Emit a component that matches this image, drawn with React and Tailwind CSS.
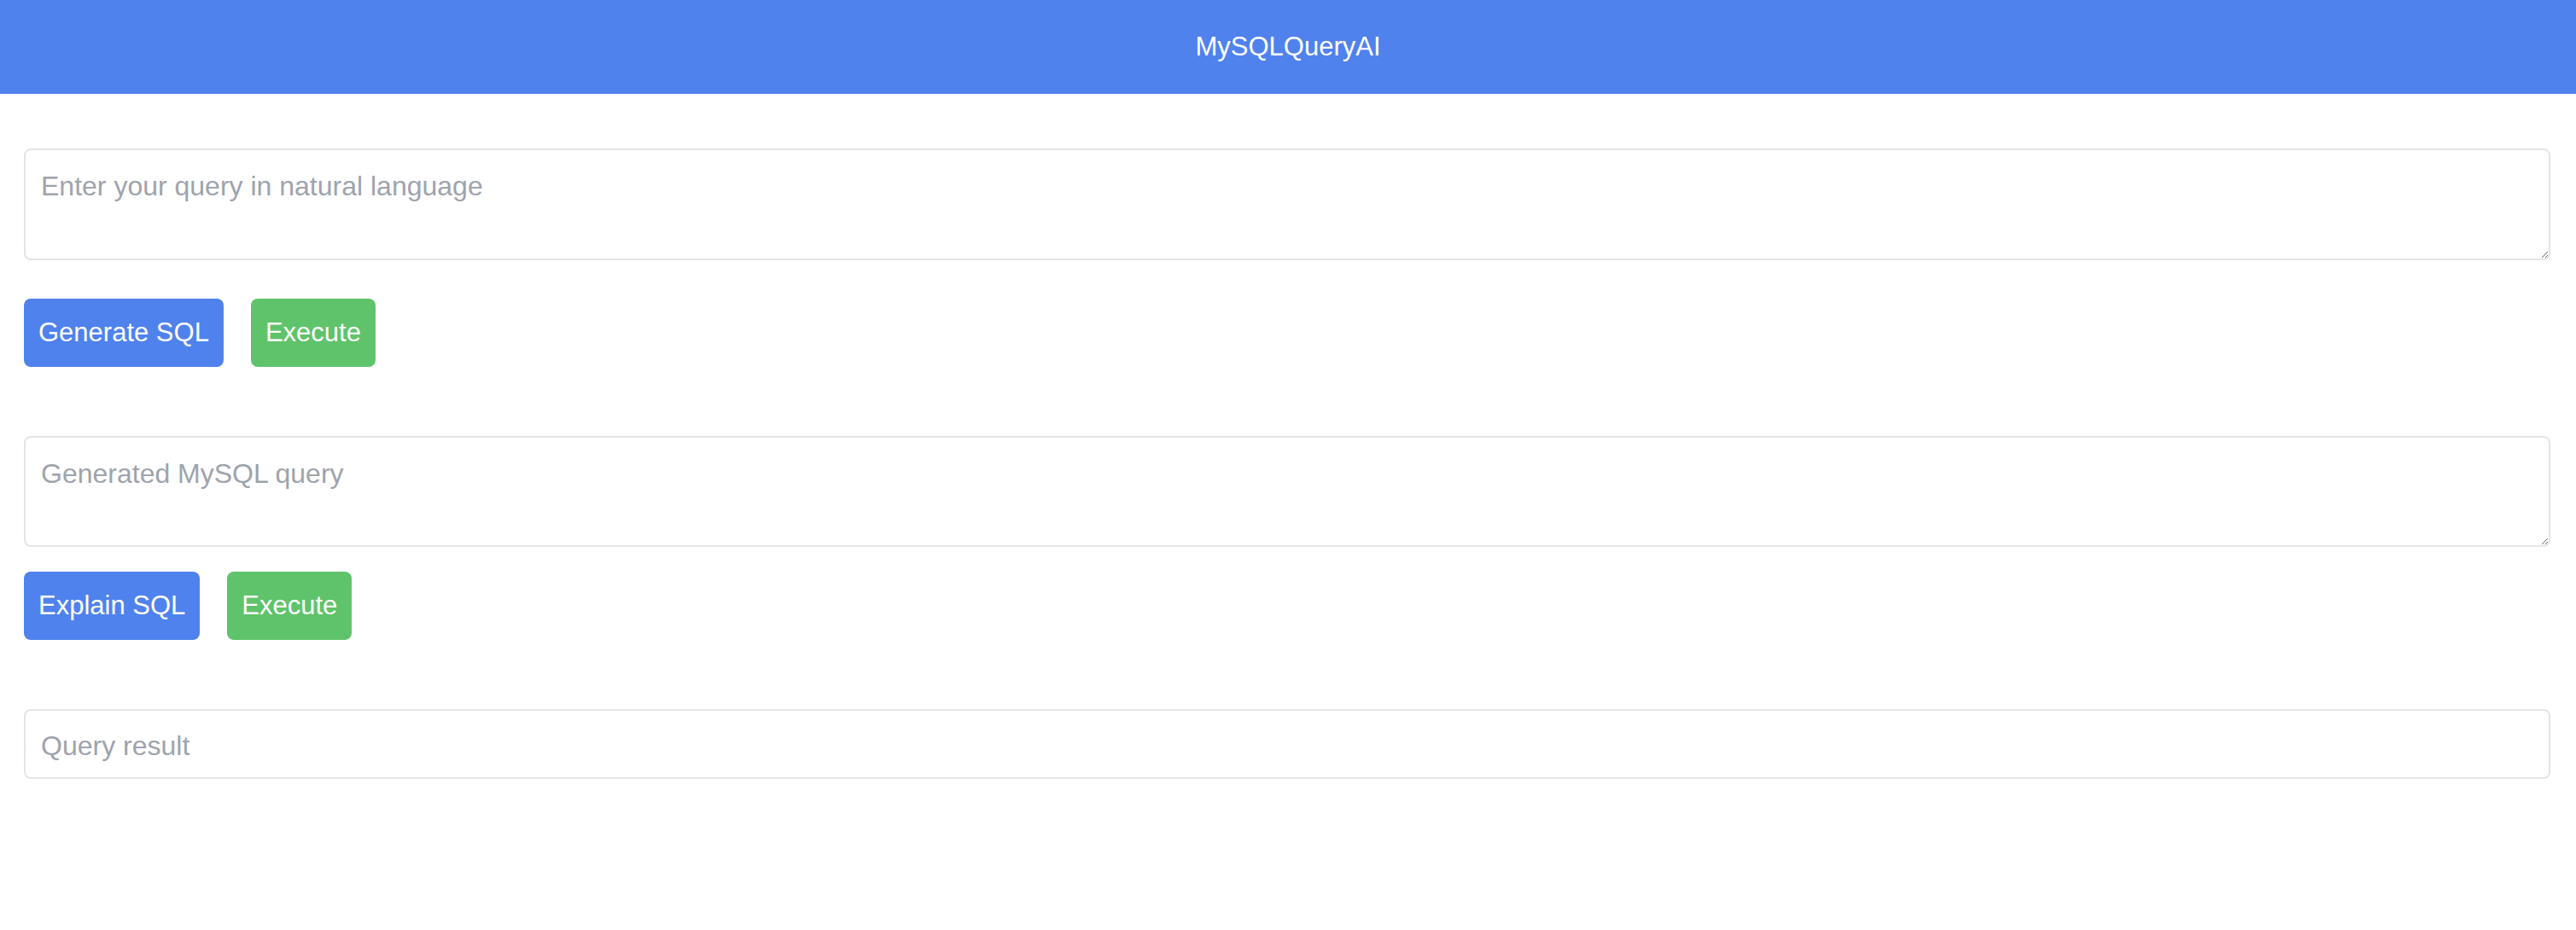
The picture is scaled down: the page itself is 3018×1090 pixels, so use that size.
import { useState } from 'react';

const font = { fontFamily: '"Liberation Sans", Arial, sans-serif' };

function ActionButton({ color, children, onClick }) {
  return (
    <button
      onClick={onClick}
      className={`h-[80px] px-[17px] rounded-[8px] text-white text-[31px] flex items-center ${color}`}
      style={font}
    >
      {children}
    </button>
  );
}

export default function App() {
  const [query, setQuery] = useState('');
  const [sql, setSql] = useState('');

  return (
    <div className="min-h-screen bg-white" style={font}>
      {/* Header */}
      <header className="h-[110px] bg-[#4f82ed] flex items-center justify-center">
        <h1 className="text-white text-[31px] font-normal">MySQLQueryAI</h1>
      </header>

      <main className="pl-[28px] pr-[30px] pt-[64px] flex flex-col">
        <textarea
          value={query}
          onChange={(e) => setQuery(e.target.value)}
          placeholder="Enter your query in natural language"
          className="w-full h-[131px] border-2 border-[#e4e5e9] rounded-[8px] pt-[22px] px-[18px] text-[32px] leading-[40px] text-gray-800 placeholder:text-[#9ea3ad] outline-none"
          style={font}
        />

        <div className="mt-[45px] flex gap-[32px]">
          <ActionButton color="bg-[#4f82ed]">Generate SQL</ActionButton>
          <ActionButton color="bg-[#5fc36b]">Execute</ActionButton>
        </div>

        <textarea
          value={sql}
          onChange={(e) => setSql(e.target.value)}
          placeholder="Generated MySQL query"
          className="mt-[81px] w-full h-[130px] border-2 border-[#e4e5e9] rounded-[8px] pt-[22px] px-[18px] text-[32px] leading-[40px] text-gray-800 placeholder:text-[#9ea3ad] outline-none"
          style={font}
        />

        <div className="mt-[29px] flex gap-[32px]">
          <ActionButton color="bg-[#4f82ed]">Explain SQL</ActionButton>
          <ActionButton color="bg-[#5fc36b]">Execute</ActionButton>
        </div>

        {/* Result */}
        <div className="mt-[81px] h-[82px] border-2 border-[#e4e5e9] rounded-[8px] pt-[21px] px-[18px] text-[32px] leading-[40px] text-[#9ea3ad]">
          Query result
        </div>
      </main>
    </div>
  );
}
